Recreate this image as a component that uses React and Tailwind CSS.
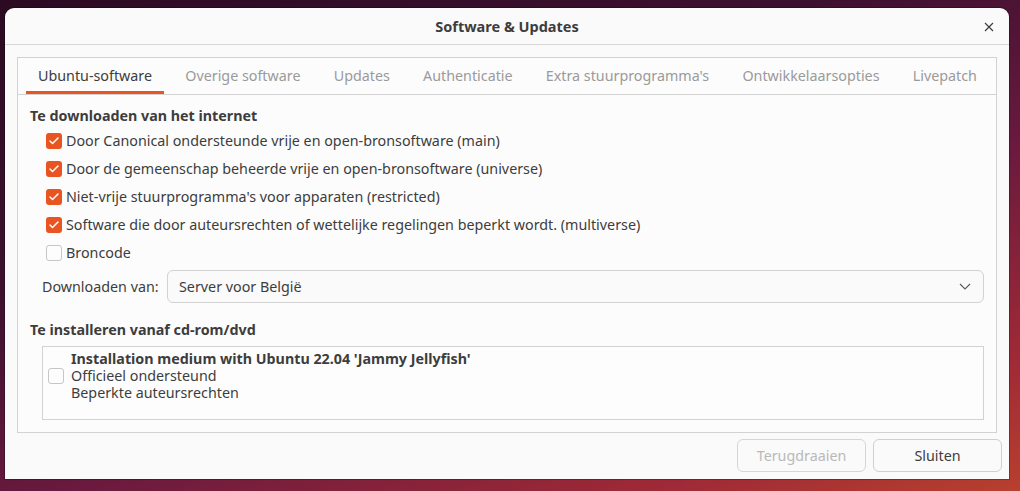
import React from 'react';
import { Check } from 'lucide-react';

const tabs = [
  'Ubuntu-software',
  'Overige software',
  'Updates',
  'Authenticatie',
  "Extra stuurprogramma's",
  'Ontwikkelaarsopties',
  'Livepatch',
];

const sources = [
  { label: 'Door Canonical ondersteunde vrije en open-bronsoftware (main)', checked: true },
  { label: 'Door de gemeenschap beheerde vrije en open-bronsoftware (universe)', checked: true },
  { label: "Niet-vrije stuurprogramma's voor apparaten (restricted)", checked: true },
  { label: 'Software die door auteursrechten of wettelijke regelingen beperkt wordt. (multiverse)', checked: true },
  { label: 'Broncode', checked: false },
];

const CheckBox = ({ checked }) =>
  checked ? (
    <span className="flex h-[16px] w-[16px] shrink-0 items-center justify-center rounded-[3px] bg-[#e95420]">
      <Check className="h-[12px] w-[12px] text-white" strokeWidth={3} />
    </span>
  ) : (
    <span className="h-[16px] w-[16px] shrink-0 rounded-[3px] border border-[#c6c6c6] bg-[#fdfdfd]" />
  );

const App = () => {
  return (
    <div
      className="h-[491px] w-[1020px] overflow-hidden bg-[linear-gradient(160deg,#2c0a22_0%,#3e1030_35%,#6a1a3e_60%,#a02a36_85%,#b8402e_100%)] pl-[5px] pt-[8px] text-[#3d3d3d]"
      style={{ fontFamily: '"Noto Sans", "DejaVu Sans", sans-serif' }}
    >
      <div className="flex h-[471px] w-[1004px] flex-col rounded-t-[9px] bg-[#fafafa] shadow-[0_0_0_1px_rgba(0,0,0,0.25)]">
        {/* title bar */}
        <div className="relative flex h-[37px] shrink-0 items-center justify-center border-b border-[#d6d6d6] pt-[2px]">
          <span className="text-[14.5px] font-bold">Software &amp; Updates</span>
          <button className="absolute right-[14px] top-[13px] flex h-[12px] w-[12px] items-center justify-center">
            <svg width="10" height="10" viewBox="0 0 10 10">
              <path d="M1 1 L9 9 M9 1 L1 9" stroke="#3d3d3d" strokeWidth="1.2" />
            </svg>
          </button>
        </div>

        <div className="px-[12px] pt-[12px]">
          {/* notebook */}
          <div className="flex h-[376px] w-[980px] flex-col border border-[#d2d2d2] bg-[#fcfcfc]">
            <div className="flex h-[37px] shrink-0 justify-between border-b border-[#d2d2d2] pl-[8px] pr-[7px]">
              {tabs.map((t, i) => (
                <div
                  key={t}
                  className={
                    i === 0
                      ? 'flex items-center border-b-[3px] border-[#e95420] px-[12px] pt-[3px] text-[14.3px]'
                      : 'flex items-center border-b-[3px] border-transparent px-[12px] pt-[3px] text-[14.3px] text-[#9a9a9a]'
                  }
                >
                  {t}
                </div>
              ))}
            </div>

            <div className="flex flex-col pl-[12px] pr-[12px] pt-[11px]">
              <div className="flex h-[20px] items-center text-[14.3px] font-bold">Te downloaden van het internet</div>
              <div className="mt-[1px] flex flex-col pl-[16px]">
                {sources.map((s) => (
                  <div key={s.label} className="flex h-[28px] items-center gap-[4px] text-[14.3px]">
                    <CheckBox checked={s.checked} />
                    <span>{s.label}</span>
                  </div>
                ))}
              </div>

              <div className="mt-[3px] flex items-center pl-[12px]">
                <span className="w-[125px] shrink-0 text-[14.3px]">Downloaden van:</span>
                <div className="flex h-[33px] flex-1 items-center justify-between rounded-[6px] border border-[#d2d2d2] bg-[#fafafa] pl-[11px] pr-[12px] text-[14.3px]">
                  <span>Server voor België</span>
                  <svg width="12" height="7" viewBox="0 0 12 7">
                    <path d="M1 1 L6 6 L11 1" fill="none" stroke="#5a5a5a" strokeWidth="1.1" />
                  </svg>
                </div>
              </div>

              <div className="mt-[17px] flex h-[20px] items-center text-[14.3px] font-bold">Te installeren vanaf cd-rom/dvd</div>
              <div className="ml-[12px] mt-[6px] h-[74px] border border-[#d2d2d2] bg-[#fdfdfd] pl-[5px] pt-[3px]">
                <div className="flex items-center gap-[7px]">
                  <CheckBox checked={false} />
                  <div className="flex flex-col text-[14.3px] leading-[17px]">
                    <span className="font-bold">Installation medium with Ubuntu 22.04 'Jammy Jellyfish'</span>
                    <span>Officieel ondersteund</span>
                    <span>Beperkte auteursrechten</span>
                  </div>
                </div>
              </div>
            </div>
          </div>
        </div>

        {/* buttons */}
        <div className="mt-[6px] flex justify-end gap-[7px] pr-[7px]">
          <button className="h-[33px] w-[129px] rounded-[6px] border border-[#d6d6d6] bg-[#fafafa] text-[14.3px] text-[#b9b9b9]">
            Terugdraaien
          </button>
          <button className="h-[33px] w-[129px] rounded-[6px] border border-[#cfcfcf] bg-[#fafafa] text-[14.3px] text-[#3d3d3d]">
            Sluiten
          </button>
        </div>
      </div>
    </div>
  );
};

export default App;
